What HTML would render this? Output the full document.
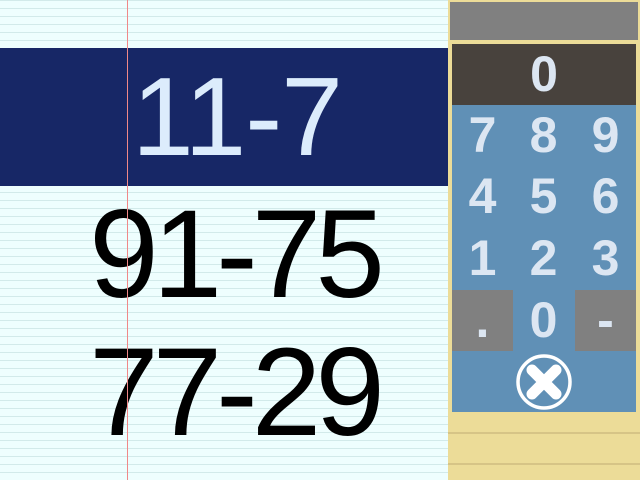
<!DOCTYPE html>
<html><head><style>
body{margin:0;width:640px;height:480px;overflow:hidden;position:relative;font-family:"Liberation Sans",sans-serif;}
.paper{position:absolute;left:0;top:0;width:448px;height:480px;background:#eefefe repeating-linear-gradient(to bottom,#d2eaea 0 1px,transparent 1px 8px);}
.margin{position:absolute;left:127px;top:0;width:1px;height:480px;background:#f08888;}
.row{position:absolute;left:0;width:448px;height:138px;text-align:center;font-size:125px;line-height:138px;color:#000;letter-spacing:-6px;padding-left:20px;box-sizing:border-box;}
.sel{background:#172766;color:#dcecfc;font-size:111px;letter-spacing:-1px;padding-left:26px;}
.yel{position:absolute;left:448px;top:0;width:192px;height:480px;background:#ecdc98;}
.yl{position:absolute;left:448px;width:192px;height:2px;background:#d6c486;}
.top{position:absolute;left:450px;top:2px;width:188px;height:38px;background:#808080;}
.disp{position:absolute;left:452px;top:44px;width:184px;height:61px;background:#48423d;color:#dce6f2;font-weight:bold;font-size:50px;text-align:center;line-height:61px;}
.pad{position:absolute;left:452px;top:105px;width:184px;height:307px;background:#6090b6;}
.k{position:absolute;width:61px;height:61px;text-align:center;line-height:61px;font-weight:bold;font-size:50px;color:#dce6f2;}
.g{background:#808080;}
</style></head><body>
<div class="paper"></div>
<div class="row sel" style="top:48px">11-7</div>
<div class="row" style="top:186px">91-75</div>
<div class="row" style="top:324px">77-29</div>
<div class="margin"></div>
<div class="yel"></div>
<div class="yl" style="top:432px"></div>
<div class="yl" style="top:463px"></div>
<div class="top"></div>
<div class="disp">0</div>
<div class="pad">
<div class="k" style="left:0;top:0">7</div><div class="k" style="left:61px;top:0">8</div><div class="k" style="left:123px;top:0">9</div>
<div class="k" style="left:0;top:61px">4</div><div class="k" style="left:61px;top:61px">5</div><div class="k" style="left:123px;top:61px">6</div>
<div class="k" style="left:0;top:123px">1</div><div class="k" style="left:61px;top:123px">2</div><div class="k" style="left:123px;top:123px">3</div>
<div class="k g" style="left:0;top:185px">.</div><div class="k" style="left:61px;top:185px">0</div><div class="k g" style="left:123px;top:185px">-</div>
<svg style="position:absolute;left:63px;top:248px" width="58" height="58" viewBox="0 0 58 58">
<circle cx="29" cy="29" r="26" fill="none" stroke="#fff" stroke-width="3.5"/>
<path d="M17 17L41 41M41 17L17 41" stroke="#fff" stroke-width="11" stroke-linecap="round"/>
</svg>
</div>
</body></html>
